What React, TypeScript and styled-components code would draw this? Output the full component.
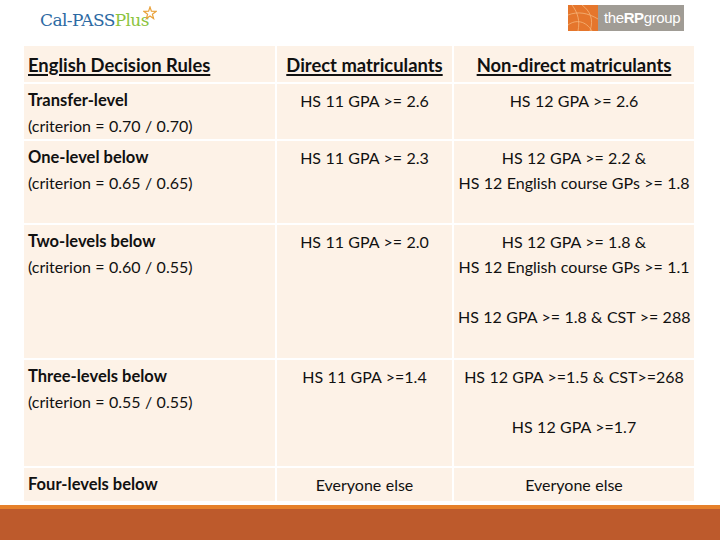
import { createGlobalStyle } from "styled-components";
import styled from "styled-components";

const GlobalStyle = createGlobalStyle`
  html, body {
    margin: 0;
    padding: 0;
    background: #ffffff;
  }
  body {
    font-family: Lato, "Open Sans", "Liberation Sans", sans-serif;
    color: #111111;
  }
`;

const Page = styled.div`
  width: 720px;
  height: 540px;
  display: flex;
  flex-direction: column;
  overflow: hidden;
`;

const TopBar = styled.header`
  height: 46px;
  display: flex;
  justify-content: space-between;
  align-items: flex-start;
  padding: 0 36px 0 40px;
  box-sizing: border-box;
`;

const CalPass = styled.div`
  position: relative;
  margin-top: 9px;
  font-family: "DejaVu Serif", "Liberation Serif", serif;
  font-size: 17px;
  letter-spacing: -0.6px;
  line-height: 22px;
`;

const CalBlue = styled.span`
  color: #2d6aa3;
`;

const CalGreen = styled.span`
  color: #8cc43f;
`;

const Star = styled.svg`
  position: absolute;
  right: -8px;
  top: -3px;
`;

const RpLogo = styled.div`
  display: flex;
  margin-top: 5px;
  height: 26px;
`;

const RpMark = styled.svg`
  display: block;
`;

const RpName = styled.div`
  width: 86px;
  background: #a09c95;
  color: #ffffff;
  font-family: "Liberation Sans", Arial, sans-serif;
  font-size: 15px;
  letter-spacing: -0.4px;
  line-height: 26px;
  padding-left: 6px;
  box-sizing: border-box;
`;

const Light = styled.span`
  font-weight: 400;
`;

const Heavy = styled.span`
  font-weight: 700;
`;

const Table = styled.div`
  margin-left: 24px;
  width: 670px;
  display: grid;
  grid-template-columns: 251px 175px 240px;
  grid-template-rows: 36px 55px 82px 133px 106px 33px;
  gap: 2px;
  font-size: 16px;
  line-height: 25px;
  word-spacing: 0.3px;
`;

const Cell = styled.div<{ $center?: boolean; $head?: boolean }>`
  background: #fdf2e7;
  padding: ${(p) => (p.$head ? "7px 4px 0" : "4px 4px 0")};
  text-align: ${(p) => (p.$center ? "center" : "left")};
  white-space: nowrap;
  box-sizing: border-box;
`;

const HeadText = styled.span`
  font-size: 18.4px;
  font-weight: 700;
  word-spacing: 0;
  text-decoration: underline;
  text-underline-offset: 2px;
  text-decoration-thickness: 1.5px;
`;

const Level = styled.div`
  font-weight: 700;
  font-size: 16.5px;
  word-spacing: 0;
`;

const Line = styled.div``;

const Gap = styled.div`
  height: 25px;
`;

const Footer = styled.footer`
  margin-top: auto;
  height: 35px;
  background: #bd5a2c;
  border-top: 4px solid #e6802a;
  box-sizing: border-box;
`;

type Row = {
  level: string;
  criterion?: string;
  direct: string;
  nonDirect: (string | null)[];
};

const rows: Row[] = [
  {
    level: "Transfer-level",
    criterion: "(criterion = 0.70 / 0.70)",
    direct: "HS 11 GPA >= 2.6",
    nonDirect: ["HS 12 GPA >= 2.6"],
  },
  {
    level: "One-level below",
    criterion: "(criterion = 0.65 / 0.65)",
    direct: "HS 11 GPA >= 2.3",
    nonDirect: ["HS 12 GPA >= 2.2 &", "HS 12 English course GPs >= 1.8"],
  },
  {
    level: "Two-levels below",
    criterion: "(criterion = 0.60 / 0.55)",
    direct: "HS 11 GPA >= 2.0",
    nonDirect: [
      "HS 12 GPA >= 1.8  &",
      "HS 12 English course GPs >= 1.1",
      null,
      "HS 12 GPA >= 1.8 & CST >= 288",
    ],
  },
  {
    level: "Three-levels below",
    criterion: "(criterion = 0.55 / 0.55)",
    direct: "HS 11 GPA >=1.4",
    nonDirect: ["HS 12 GPA >=1.5 & CST>=268", null, "HS 12 GPA  >=1.7"],
  },
  {
    level: "Four-levels below",
    direct: "Everyone else",
    nonDirect: ["Everyone else"],
  },
];

const App = () => {
  return (
    <Page>
      <GlobalStyle />
      <TopBar>
        <CalPass>
          <CalBlue>Cal-PASS</CalBlue>
          <CalGreen>Plus</CalGreen>
          <Star width="14" height="14" viewBox="0 0 14 14">
            <path
              d="M7 1 L8.4 5.2 L13 5.4 L9.4 8.2 L10.6 12.6 L7 10 L3.4 12.6 L4.6 8.2 L1 5.4 L5.6 5.2 Z"
              fill="none"
              stroke="#e9a23b"
              strokeWidth="1.2"
            />
          </Star>
        </CalPass>
        <RpLogo>
          <RpMark width="30" height="26" viewBox="0 0 30 26">
            <rect width="30" height="26" fill="#e5762c" />
            <path d="M4 0 C10 8 12 16 10 26" stroke="#f5b57a" strokeWidth="0.8" fill="none" />
            <path d="M0 10 C10 6 20 8 30 14" stroke="#f5b57a" strokeWidth="0.8" fill="none" />
            <path d="M14 0 C22 6 26 14 22 26" stroke="#f5b57a" strokeWidth="0.8" fill="none" />
            <path d="M0 20 C8 14 18 16 24 26" stroke="#f5b57a" strokeWidth="0.8" fill="none" />
          </RpMark>
          <RpName>
            <Light>the</Light>
            <Heavy>RP</Heavy>
            <Light>group</Light>
          </RpName>
        </RpLogo>
      </TopBar>
      <Table>
        <Cell $head>
          <HeadText>English Decision Rules</HeadText>
        </Cell>
        <Cell $head $center>
          <HeadText>Direct matriculants</HeadText>
        </Cell>
        <Cell $head $center>
          <HeadText>Non-direct matriculants</HeadText>
        </Cell>
        {rows.map((row, i) => (
          <>
            <Cell key={`a${i}`}>
              <Level>{row.level}</Level>
              {row.criterion && <Line>{row.criterion}</Line>}
            </Cell>
            <Cell key={`b${i}`} $center>
              <Line>{row.direct}</Line>
            </Cell>
            <Cell key={`c${i}`} $center>
              {row.nonDirect.map((text, j) =>
                text === null ? <Gap key={j} /> : <Line key={j}>{text}</Line>
              )}
            </Cell>
          </>
        ))}
      </Table>
      <Footer />
    </Page>
  );
};

export default App;
